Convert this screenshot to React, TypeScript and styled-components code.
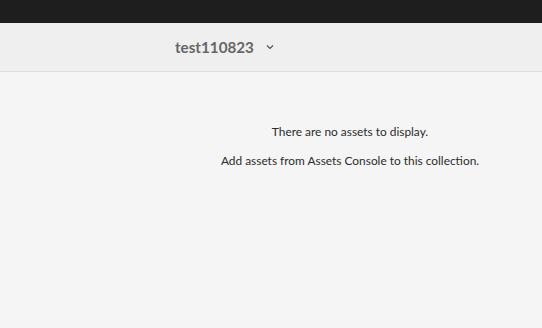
import styled, { createGlobalStyle } from "styled-components";

const GlobalStyle = createGlobalStyle`
  html, body {
    margin: 0;
    padding: 0;
    background: #f5f5f5;
    font-family: Lato, "Open Sans", sans-serif;
  }
`;

// dark strip at the very top
const TopBar = styled.div`
  height: 23px;
  background: #1e1e1e;
`;

// collection header with the title and its dropdown
const Header = styled.header`
  height: 48px;
  background: #efefef;
  border-bottom: 1px solid #dcdcdc;
  display: flex;
  align-items: center;
  padding-left: 175px;
  gap: 11px;
`;

const Title = styled.h1`
  margin: 0;
  font-size: 15.2px;
  font-weight: 700;
  color: #666666;
`;

const ChevronButton = styled.button`
  border: none;
  background: none;
  padding: 0;
  display: flex;
  align-items: center;
  color: #505050;
  cursor: pointer;
`;

// empty state message
const Empty = styled.main`
  height: 256px;
  display: flex;
  flex-direction: column;
  align-items: center;
  padding-left: 158px;
  padding-top: 51px;
  box-sizing: border-box;
  background: #f5f5f5;
  gap: 11px;
`;

const Message = styled.p`
  margin: 0;
  font-size: 11.9px;
  line-height: 18px;
  color: #2c2c2c;
`;

export default function App() {
  return (
    <>
      <GlobalStyle />
      <TopBar />
      <Header>
        <Title>test110823</Title>
        <ChevronButton aria-label="Collection options">
          <svg width="10" height="10" viewBox="0 0 10 10">
            <path d="M2 3.5 L5 6.5 L8 3.5" fill="none" stroke="currentColor" strokeWidth="1.2" />
          </svg>
        </ChevronButton>
      </Header>
      <Empty>
        <Message>There are no assets to display.</Message>
        <Message>Add assets from Assets Console to this collection.</Message>
      </Empty>
    </>
  );
}
